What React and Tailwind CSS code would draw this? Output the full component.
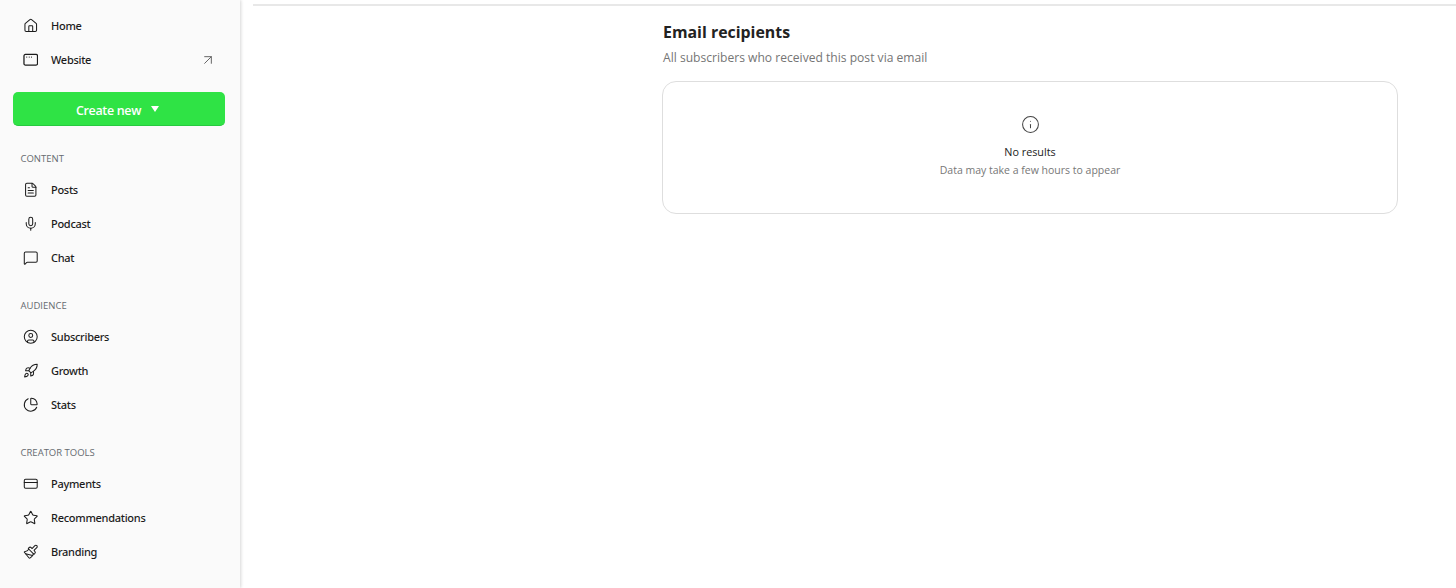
import React from 'react';
import { House, ArrowUpRight, FileText, Mic, MessageSquare, CircleUser, Rocket, ChartPie, CreditCard, Star, Paintbrush, Info } from 'lucide-react';

const WebsiteIcon = ({ className }) => (
    <svg className={className} viewBox="0 0 16 16" fill="none" stroke="currentColor" strokeWidth="1.3">
        <rect x="1" y="2.5" width="14" height="11" rx="1.5" />
        <path d="M3.5 5.2h.8M6 5.2h.8M8.5 5.2h.8" />
    </svg>
);

const sections = [
    {
        title: 'CONTENT',
        items: [
            { label: 'Posts', icon: FileText },
            { label: 'Podcast', icon: Mic },
            { label: 'Chat', icon: MessageSquare }
        ]
    },
    {
        title: 'AUDIENCE',
        items: [
            { label: 'Subscribers', icon: CircleUser },
            { label: 'Growth', icon: Rocket },
            { label: 'Stats', icon: ChartPie }
        ]
    },
    {
        title: 'CREATOR TOOLS',
        items: [
            { label: 'Payments', icon: CreditCard },
            { label: 'Recommendations', icon: Star },
            { label: 'Branding', icon: Paintbrush }
        ]
    }
];

const NavItem = ({ label, icon: Icon, external = false }) => (
    <div className="flex h-[34px] items-center pl-[22.5px] pr-[24px] text-[#1c1c1c]">
        <Icon className="h-[15.5px] w-[15.5px] shrink-0" strokeWidth={1.6} />
        <span className="ml-[13px] font-['Noto_Sans',sans-serif] text-[11px] leading-[18px] font-medium tracking-[-0.28px]">{label}</span>
        {external && <ArrowUpRight className="ml-auto h-[16px] w-[16px] text-[#666666]" strokeWidth={1.5} />}
    </div>
);

const Sidebar = () => (
    <aside className="h-full w-[240px] shrink-0 bg-[#fafafa] pt-[9px] shadow-[1px_0_3px_rgba(0,0,0,0.16)]">
        <NavItem label="Home" icon={House} />
        <NavItem label="Website" icon={WebsiteIcon} external />

        <div className="mt-[15px] mr-[15px] ml-[13px] flex h-[34px] items-center justify-center gap-[10px] rounded-[5px] border-b border-[#27c93f] bg-[#2fe345] pr-[3px] text-white">
            <span className="mt-[4px] text-[12.5px] leading-[18px] font-semibold tracking-[-0.35px]">Create new</span>
            <span className="h-0 w-0 border-x-[4px] border-t-[6px] border-x-transparent border-t-white" />
        </div>

        <div className="mt-[25px] flex flex-col gap-[23px]">
            {sections.map((section) => (
                <div key={section.title}>
                    <div className="mb-[6px] h-[16px] pl-[20.5px] text-[9.5px] leading-[16px] font-medium text-[#666b70]">
                        {section.title}
                    </div>
                    {section.items.map((item) => (
                        <NavItem key={item.label} {...item} />
                    ))}
                </div>
            ))}
        </div>
    </aside>
);

export default function App() {
    return (
        <div className="flex h-[588px] w-[1456px] overflow-hidden bg-white font-['Open_Sans','Noto_Sans',sans-serif]">
            <Sidebar />
            <main className="flex-1 pl-[13px]">
                <div className="h-[6px] border-b-2 border-[#e8e8e8]" />
                <div className="ml-[409px] w-[736px]">
                    <h1 className="mt-[14px] ml-[1px] text-[15.9px] leading-[24px] font-bold text-[#222222]">Email recipients</h1>
                    <p className="mt-[5px] ml-[1px] text-[12.1px] leading-[18px] text-[#757575]">All subscribers who received this post via email</p>
                    <div className="mt-[14px] flex h-[133px] flex-col items-center rounded-[14px] border border-[#dedede] pt-[33px]">
                        <Info className="h-[19px] w-[19px] text-[#444444]" strokeWidth={1.3} />
                        <div className="mt-[10px] text-[10.8px] leading-[16px] font-medium text-[#222222]">No results</div>
                        <div className="mt-[2px] text-[10.5px] leading-[16px] text-[#777777]">Data may take a few hours to appear</div>
                    </div>
                </div>
            </main>
        </div>
    );
}
